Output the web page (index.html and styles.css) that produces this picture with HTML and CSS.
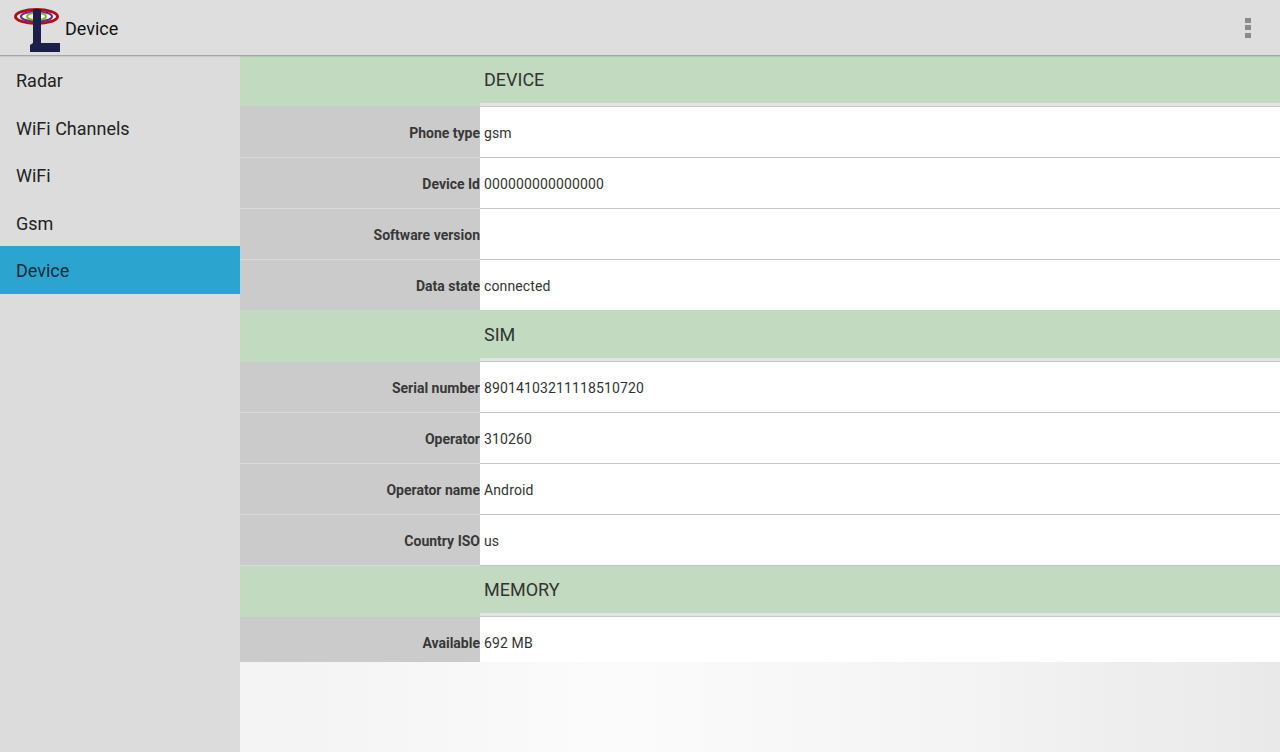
FILE: index.html
```html
<!DOCTYPE html>
<html>
<head>
<meta charset="utf-8">
<title>Device</title>
<link rel="stylesheet" href="styles.css">
</head>
<body>
<header class="bar">
  <svg class="logo" width="46" height="46" viewBox="0 0 46 46">
    <ellipse cx="22.500" cy="10.500" rx="21" ry="7" fill="#f2f2f2" stroke="#b01018" stroke-width="3"/>
    <ellipse cx="22.500" cy="10.500" rx="15.500" ry="5" fill="none" stroke="#6a2a8c" stroke-width="2.200"/>
    <ellipse cx="22.500" cy="10.500" rx="9.500" ry="3.600" fill="none" stroke="#8ab020" stroke-width="1.800"/>
    <path d="M19 3h8v34h19v9H16v-7l3-2z" fill="#1c2048"/>
  </svg>
  <span class="title">Device</span>
  <div class="overflow"><i></i><i></i><i></i></div>
</header>
<div class="body">
  <nav class="drawer">
    <div class="item">Radar</div>
    <div class="item">WiFi Channels</div>
    <div class="item">WiFi</div>
    <div class="item">Gsm</div>
    <div class="item active">Device</div>
  </nav>
  <main class="content">
    <div class="head first"><div class="head-l"></div><div class="head-r"><div class="head-t">DEVICE</div></div></div>
    <div class="row"><div class="k">Phone type</div><div class="v">gsm</div></div>
    <div class="row"><div class="k">Device Id</div><div class="v">000000000000000</div></div>
    <div class="row"><div class="k">Software version</div><div class="v"></div></div>
    <div class="row end"><div class="k">Data state</div><div class="v">connected</div></div>
    <div class="head up"><div class="head-l"></div><div class="head-r"><div class="head-t">SIM</div></div></div>
    <div class="row"><div class="k">Serial number</div><div class="v">89014103211118510720</div></div>
    <div class="row"><div class="k">Operator</div><div class="v">310260</div></div>
    <div class="row"><div class="k">Operator name</div><div class="v">Android</div></div>
    <div class="row"><div class="k">Country ISO</div><div class="v">us</div></div>
    <div class="head"><div class="head-l"></div><div class="head-r"><div class="head-t">MEMORY</div></div></div>
    <div class="row last"><div class="k">Available</div><div class="v">692 MB</div></div>
  </main>
</div>
</body>
</html>
```
FILE: styles.css
```css
html, body { margin: 0; padding: 0; }
body { width: 1280px; height: 752px; overflow: hidden; font-family: Roboto, sans-serif; background: #f6f6f6; color: #222; }
.bar { height: 56px; box-sizing: border-box; display: flex; align-items: center; background: #dedede; border-bottom: 1px solid #a3a7a3; position: relative; z-index: 1; box-shadow: 0 1px 1px rgba(0,0,0,.08); }
.logo { margin: 6px 5px 0 14px; flex: none; align-self: flex-start; }
.title { font-size: 18px; color: #111; flex: 1; padding-top: 2px; }
.overflow { width: 6px; margin-right: 29px; display: flex; flex-direction: column; gap: 2.5px; }
.overflow i { display: block; height: 5px; background: #8b8b8b; }
.body { display: flex; height: 696px; }
.drawer { width: 240px; background: #dcdcdc; flex: none; }
.item { height: 47.5px; line-height: 50px; padding-left: 16px; font-size: 18px; color: #222; box-sizing: border-box; }
.item.active { background: #2ba5d0; height: 48px; line-height: 49px; color: #0f2a36; }
.content { flex: 1; background: linear-gradient(90deg, #f3f3f3, #fbfbfb 36%, #f5f5f5 65%, #e9e9e9); }
.head { display: flex; height: 51px; }
.head-l { width: 240px; background: #c2dbc0; flex: none; box-sizing: border-box; }
.head.first .head-l { border-bottom: 1px solid #cbcbcb; }
.head-r { flex: 1; background: #fff; border-bottom: 1px solid #c8c8c8; }
.head.up { height: 52px; margin-top: -1px; }
.head-t { height: 47px; background: #c2dbc0; border-bottom: 3px solid #e4e4e4; line-height: 47px; padding-left: 4px; font-size: 18px; color: #333; }
.head.up .head-t { height: 48px; line-height: 49px; }
.row { display: flex; height: 51px; }
.k { width: 240px; flex: none; box-sizing: border-box; background: #cbcbcb; border-bottom: 1px solid #d8d8d8; text-align: right; font-weight: 700; font-size: 14px; line-height: 52px; color: #383838; }
.v { flex: 1; background: #fff; border-bottom: 1px solid #c4c4c4; padding-left: 4px; font-size: 14px; line-height: 52px; color: #333; letter-spacing: .13px; }
.row.end .k, .row.end .v { border-bottom: 0; }
.row.last { height: 45px; }
.row.last .k, .row.last .v { border-bottom: 0; overflow: hidden; }
```
